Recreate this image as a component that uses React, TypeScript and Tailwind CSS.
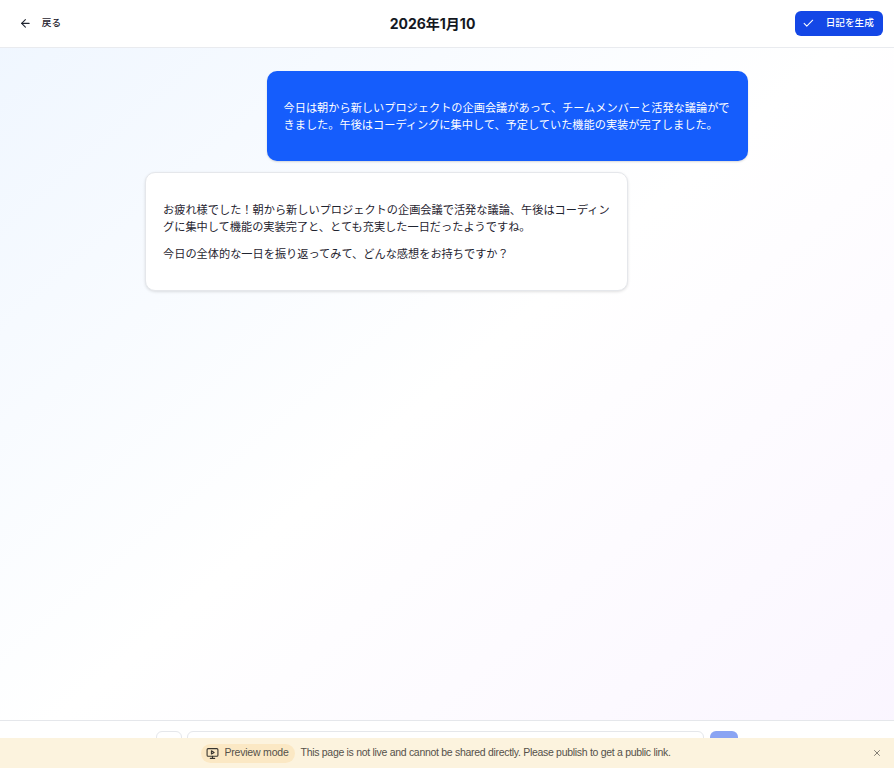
import { ArrowLeft, Check, Plus, Send, X } from "lucide-react";

const CJK = "font-['Inter','Noto_Sans_CJK_JP',sans-serif]";

const Header = () => (
  <header className="flex h-[48px] shrink-0 items-center justify-between border-b border-[#e9ebef] bg-white pl-[12px] pr-[11px]">
    <button className="flex h-[32px] items-center gap-[10px] rounded-md pl-[7px] pr-[9px] text-[9.6px] font-medium text-[#1f2430]">
      <ArrowLeft className="h-[12.8px] w-[12.8px]" strokeWidth={2} />
      戻る
    </button>
    <h1 className="text-[14px] font-bold text-[#14181f]">2026年1月10</h1>
    <button className="flex h-[25px] w-[88px] items-center gap-[11px] rounded-[6px] bg-[#1447e6] pl-[7px] text-[9.6px] font-medium text-white">
      <Check className="h-[12.8px] w-[12.8px]" strokeWidth={2} />
      日記を生成
    </button>
  </header>
);

const Messages = () => (
  <main className="flex min-h-0 flex-1 flex-col">
    <div className="ml-[145px] flex w-[603px] flex-col gap-[12px] pt-[23px]">
      <div className="ml-auto flex h-[90px] w-[481px] items-center rounded-[10px] bg-[#155dfc] pl-[16.5px] pr-[17px] pt-[1px] text-[11.2px] leading-[16.8px] text-white shadow-[0_1px_2px_rgba(0,0,0,0.15)]">
        <p>今日は朝から新しいプロジェクトの企画会議があって、チームメンバーと活発な議論ができました。午後はコーディングに集中して、予定していた機能の実装が完了しました。</p>
      </div>
      <div className="-mt-[1px] flex h-[119px] w-[483px] flex-col justify-center gap-[11px] rounded-[10px] border border-[#e5e7eb] bg-white px-[17px] pt-[2px] text-[11.2px] leading-[16.8px] text-[#1f2430] shadow-[0_1px_3px_rgba(0,0,0,0.12)]">
        <p>お疲れ様でした！朝から新しいプロジェクトの企画会議で活発な議論、午後はコーディングに集中して機能の実装完了と、とても充実した一日だったようですね。</p>
        <p>今日の全体的な一日を振り返ってみて、どんな感想をお持ちですか？</p>
      </div>
    </div>
  </main>
);

const Composer = () => (
  <footer className="flex h-[48px] shrink-0 justify-center gap-[5px] border-t border-[#e5e7eb] bg-white pt-[10px]">
    <button className="flex h-[28px] w-[26px] items-center justify-center rounded-[6px] border border-[#e5e7eb] bg-white">
      <Plus className="h-[12px] w-[12px] text-[#6b7280]" />
    </button>
    <div className="h-[28px] w-[517px] rounded-[6px] border border-[#e5e7eb] bg-white" />
    <button className="ml-[1px] flex h-[28px] w-[28px] items-center justify-center rounded-[6px] bg-[#8aa4f3]">
      <Send className="h-[12px] w-[12px] text-white" />
    </button>
  </footer>
);

const PreviewBanner = () => (
  <div className="absolute inset-x-0 bottom-0 flex h-[30px] items-center justify-center bg-[#fcf3de] pr-[22px] font-['Liberation_Sans',sans-serif] text-[10.5px] tracking-[-0.3px] text-[#55514a]">
    <div className="mr-[6px] flex h-[19px] items-center gap-[5px] rounded-full bg-[#fbe8c4] pl-[5px] pr-[6px]">
      <svg viewBox="0 0 24 24" className="h-[13px] w-[13px] text-[#37342f]" fill="none" stroke="currentColor" strokeWidth="2" strokeLinecap="round" strokeLinejoin="round">
        <rect x="2" y="3" width="20" height="14" rx="2" />
        <path d="M12 17v4M8 21h8" />
        <path d="M10 7l5 3-5 3z" />
      </svg>
      <span className="tracking-[-0.2px]">Preview mode</span>
    </div>
    <span>This page is not live and cannot be shared directly. Please publish to get a public link.</span>
    <X className="absolute right-[12px] h-[10px] w-[10px] text-[#6b6760]" />
  </div>
);

export default function App() {
  return (
    <div className={`relative flex h-screen flex-col overflow-hidden bg-gradient-to-br from-[#eff6ff] via-white to-[#faf5ff] ${CJK}`}>
      <Header />
      <Messages />
      <Composer />
      <PreviewBanner />
    </div>
  );
}
